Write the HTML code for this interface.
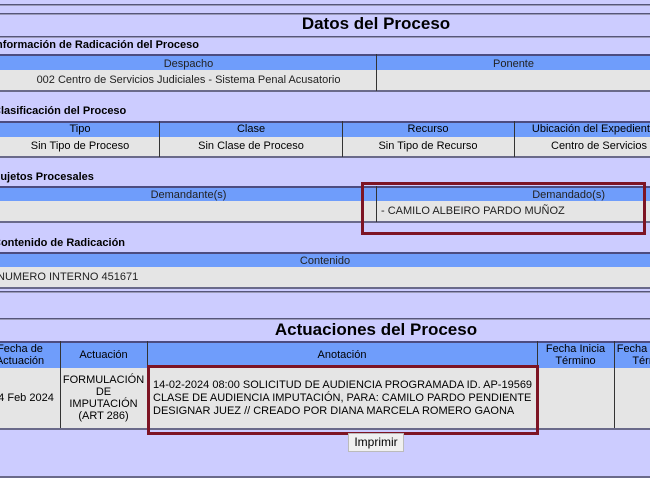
<!DOCTYPE html><html><head><meta charset="utf-8"><style>
html,body{margin:0;padding:0}
body{width:650px;height:487px;background:#fff;font-family:"Liberation Sans",Arial,sans-serif;font-size:11px;color:#000}
#w{position:relative;width:650px;height:487px;overflow:hidden}
.a{position:absolute}
.bg{left:0;top:0;width:650px;height:476px;background:#ccccff;border-bottom:2px solid #6a6a8a}
.hl{position:absolute;left:0;width:650px;height:1px;background:#55557a;border-bottom:1px solid #9a9ab8}
.t{position:absolute;left:0;width:752px;text-align:center;font-weight:bold;font-size:17px}
.s{position:absolute;left:-7px;font-weight:bold;font-size:11px}
.h{position:absolute;background:#6f9dfb;border-top:2px solid #4c4c80;height:14px;line-height:14px;text-align:center;box-sizing:border-box;color:#222}
.d{position:absolute;background:#e5e5e5;text-align:center;color:#222;box-sizing:border-box;border-bottom:2px solid #6a6a8a}
.v{position:absolute;width:1px;background:#333}
.red{position:absolute;border:3px solid #7d1424;box-sizing:border-box}
</style></head><body><div id="w">
<div class="a bg"></div>
<div class="hl" style="top:4px"></div>
<div class="hl" style="top:13px"></div>
<div class="t" style="top:14px">Datos del Proceso</div>
<div class="hl" style="top:36px"></div>
<div class="s" style="top:39px">Información de Radicación del Proceso</div>
<div class="h" style="left:0;top:54px;width:377px;height:16px;padding-top:1px">Despacho</div>
<div class="h" style="left:377px;top:54px;width:273px;height:16px;padding-top:1px">Ponente</div>
<div class="d" style="left:0;top:70px;width:650px;height:22px;line-height:20px"><span class="a" style="left:0;width:377px">002 Centro de Servicios Judiciales - Sistema Penal Acusatorio</span></div>
<div class="v" style="left:376px;top:54px;height:37px"></div>
<div class="s" style="top:105px">Clasificación del Proceso</div>
<div class="h" style="left:0;top:121px;width:650px;height:16px;padding-top:1px"></div>
<div class="a" style="left:0;top:122px;width:160px;text-align:center;line-height:14px">Tipo</div>
<div class="a" style="left:160px;top:122px;width:182px;text-align:center;line-height:14px">Clase</div>
<div class="a" style="left:342px;top:122px;width:172px;text-align:center;line-height:14px">Recurso</div>
<div class="a" style="left:514px;top:122px;width:160px;text-align:center;line-height:14px;white-space:nowrap">Ubicación del Expediente</div>
<div class="d" style="left:0;top:137px;width:650px;height:21px;line-height:19px"></div>
<div class="a" style="left:0;top:137px;width:160px;text-align:center;line-height:19px">Sin Tipo de Proceso</div>
<div class="a" style="left:160px;top:137px;width:182px;text-align:center;line-height:19px">Sin Clase de Proceso</div>
<div class="a" style="left:342px;top:137px;width:172px;text-align:center;line-height:19px">Sin Tipo de Recurso</div>
<div class="a" style="left:514px;top:137px;width:170px;text-align:center;line-height:19px;white-space:nowrap">Centro de Servicios</div>
<div class="v" style="left:159px;top:121px;height:36px"></div>
<div class="v" style="left:342px;top:121px;height:36px"></div>
<div class="v" style="left:514px;top:121px;height:36px"></div>
<div class="s" style="top:171px">Sujetos Procesales</div>
<div class="h" style="left:0;top:186px;width:377px;height:15px">Demandante(s)</div>
<div class="h" style="left:377px;top:186px;width:273px;height:15px;text-align:right;padding-right:45px">Demandado(s)</div>
<div class="d" style="left:0;top:201px;width:650px;height:22px;line-height:20px;text-align:left"><span class="a" style="left:381px">- CAMILO ALBEIRO PARDO MUÑOZ</span></div>
<div class="v" style="left:376px;top:186px;height:36px"></div>
<div class="red" style="left:361px;top:182px;width:285px;height:53px"></div>
<div class="s" style="top:237px">Contenido de Radicación</div>
<div class="h" style="left:0;top:252px;width:650px;height:15px">Contenido</div>
<div class="d" style="left:0;top:267px;width:650px;height:22px;line-height:20px;text-align:left"><span class="a" style="left:-3px">NUMERO INTERNO 451671</span></div>
<div class="hl" style="top:291px"></div>
<div class="hl" style="top:318px"></div>
<div class="t" style="top:320px">Actuaciones del Proceso</div>
<div class="h" style="left:0;top:341px;width:650px;height:27px"></div>
<div class="a" style="left:-20px;top:343px;width:80px;text-align:center;line-height:12px">Fecha de<br>Actuación</div>
<div class="a" style="left:60px;top:349px;width:87px;text-align:center">Actuación</div>
<div class="a" style="left:147px;top:349px;width:390px;text-align:center">Anotación</div>
<div class="a" style="left:537px;top:343px;width:77px;text-align:center;line-height:12px">Fecha Inicia<br>Término</div>
<div class="a" style="left:614px;top:343px;width:77px;text-align:center;line-height:12px">Fecha Finaliza<br>Término</div>
<div class="d" style="left:0;top:368px;width:650px;height:62px"></div>
<div class="a" style="left:-8px;top:392px;width:68px;text-align:center">4 Feb 2024</div>
<div class="a" style="left:60px;top:374px;width:87px;text-align:center;line-height:12px">FORMULACIÓN<br>DE<br>IMPUTACIÓN<br>(ART 286)</div>
<div class="a" style="left:153px;top:379px;line-height:13px;white-space:nowrap">14-02-2024 08:00 SOLICITUD DE AUDIENCIA PROGRAMADA ID. AP-19569<br>CLASE DE AUDIENCIA IMPUTACIÓN, PARA: CAMILO PARDO PENDIENTE<br>DESIGNAR JUEZ // CREADO POR DIANA MARCELA ROMERO GAONA</div>
<div class="v" style="left:60px;top:341px;height:87px"></div>
<div class="v" style="left:147px;top:341px;height:87px"></div>
<div class="v" style="left:537px;top:341px;height:87px"></div>
<div class="v" style="left:614px;top:341px;height:87px"></div>
<div class="red" style="left:147px;top:365px;width:392px;height:70px"></div>
<div class="a" style="left:348px;top:433px;width:56px;height:19px;background:#f0f0f0;border:1px solid #bbb;box-sizing:border-box;text-align:center;line-height:17px;font-size:12px">Imprimir</div>
</div></body></html>
